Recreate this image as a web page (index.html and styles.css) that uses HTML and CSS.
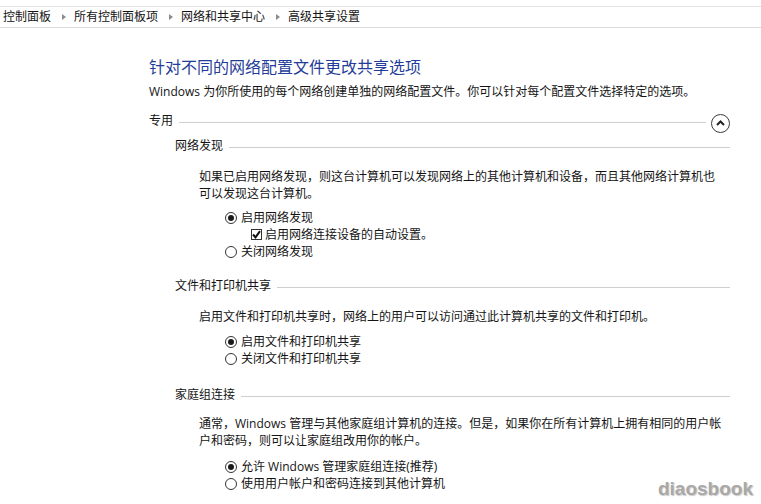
FILE: index.html
```html
<!DOCTYPE html>
<html lang="zh-CN">
<head>
<meta charset="utf-8">
<title>高级共享设置</title>
<link rel="stylesheet" href="styles.css">
</head>
<body>
<nav class="crumbs">
  <span class="crumb">控制面板</span><span class="sep"></span>
  <span class="crumb">所有控制面板项</span><span class="sep"></span>
  <span class="crumb">网络和共享中心</span><span class="sep"></span>
  <span class="crumb">高级共享设置</span>
</nav>
<main class="main">
  <h1 class="title">针对不同的网络配置文件更改共享选项</h1>
  <p class="intro">Windows 为你所使用的每个网络创建单独的网络配置文件。你可以针对每个配置文件选择特定的选项。</p>
  <div class="profile-head">
    <span class="label">专用</span><span class="rule"></span>
    <span class="collapse"><svg width="9" height="6" viewBox="0 0 9 6"><path d="M1 5 L4.5 1.5 L8 5" fill="none" stroke="#222" stroke-width="2"/></svg></span>
  </div>

  <section class="group discovery">
    <div class="group-head"><span class="label">网络发现</span><span class="rule"></span></div>
    <p class="desc">如果已启用网络发现，则这台计算机可以发现网络上的其他计算机和设备，而且其他网络计算机也<br>可以发现这台计算机。</p>
    <div class="options">
      <div class="opt"><span class="radio on"></span>启用网络发现</div>
      <div class="opt sub"><span class="check"><svg width="9" height="9" viewBox="0 0 9 9"><path d="M1 4.5 L3.5 7.3 L8 1.2" fill="none" stroke="#111" stroke-width="2"/></svg></span>启用网络连接设备的自动设置。</div>
      <div class="opt"><span class="radio"></span>关闭网络发现</div>
    </div>
  </section>

  <section class="group files">
    <div class="group-head"><span class="label">文件和打印机共享</span><span class="rule"></span></div>
    <p class="desc">启用文件和打印机共享时，网络上的用户可以访问通过此计算机共享的文件和打印机。</p>
    <div class="options">
      <div class="opt"><span class="radio on"></span>启用文件和打印机共享</div>
      <div class="opt"><span class="radio"></span>关闭文件和打印机共享</div>
    </div>
  </section>

  <section class="group home">
    <div class="group-head"><span class="label">家庭组连接</span><span class="rule"></span></div>
    <p class="desc">通常，Windows 管理与其他家庭组计算机的连接。但是，如果你在所有计算机上拥有相同的用户帐<br>户和密码，则可以让家庭组改用你的帐户。</p>
    <div class="options">
      <div class="opt"><span class="radio on"></span>允许 Windows 管理家庭组连接(推荐)</div>
      <div class="opt"><span class="radio"></span>使用用户帐户和密码连接到其他计算机</div>
    </div>
  </section>
</main>
<div class="watermark">diaosbook</div>
</body>
</html>
```

FILE: styles.css
```css
html, body {
  margin: 0;
  padding: 0;
  background: #ffffff;
}
body {
  font-family: "Open Sans", "Noto Sans CJK SC", sans-serif;
  font-size: 12px;
  line-height: 17px;
  color: #141414;
  overflow: hidden;
  height: 504px;
}
.crumbs {
  margin-top: 6px;
  height: 20px;
  border-top: 1px solid #e3e3e3;
  border-bottom: 1px solid #dcdcdc;
  display: flex;
  align-items: center;
  padding-left: 3px;
  line-height: 20px;
}
.sep {
  width: 0;
  height: 0;
  border-left: 4px solid #8c8c8c;
  border-top: 3.5px solid transparent;
  border-bottom: 3.5px solid transparent;
  margin: 0 8px 0 11px;
}
.main {
  padding: 28px 31px 0 149px;
}
.title {
  margin: 0;
  font-size: 16px;
  font-weight: normal;
  line-height: 22px;
  color: #1f3d99;
}
.intro {
  margin: 5px 0 0;
}
.profile-head {
  margin-top: 12px;
  height: 21px;
  display: flex;
  align-items: flex-start;
}
.label {
  white-space: nowrap;
}
.rule {
  flex: 1;
  height: 1px;
  background: #cfcfcf;
  margin: 10px 0 0 6px;
}
.profile-head .rule {
  margin-right: 5px;
}
.collapse {
  margin-top: 2px;
  width: 17px;
  height: 17px;
  border: 1px solid #3a3a3a;
  border-radius: 50%;
  display: flex;
  align-items: center;
  justify-content: center;
  box-sizing: content-box;
}
.collapse svg {
  margin-top: -1px;
}
.group {
  margin-left: 26px;
}
.group-head {
  margin-top: 4px;
  display: flex;
  align-items: flex-start;
  height: 17px;
}
.desc {
  margin: 14px 0 0 24px;
}
.options {
  margin: 7px 0 0 50px;
}
.files .group-head {
  margin-top: 17px;
}
.files .options {
  margin-top: 8px;
}
.home .group-head {
  margin-top: 19px;
}
.home .desc {
  margin-top: 12px;
}
.home .options {
  margin-top: 9px;
}
.opt {
  display: flex;
  align-items: center;
  height: 17px;
  white-space: nowrap;
}
.opt.sub {
  padding-left: 26px;
}
.radio {
  width: 10px;
  height: 10px;
  border: 1px solid #333;
  border-radius: 50%;
  margin-right: 4px;
  position: relative;
  background: #fff;
}
.radio.on::after {
  content: "";
  position: absolute;
  left: 2px;
  top: 2px;
  width: 6px;
  height: 6px;
  border-radius: 50%;
  background: #1a1a1a;
}
.check {
  width: 9px;
  height: 9px;
  border: 1px solid #333;
  margin-right: 3px;
  display: flex;
  align-items: center;
  justify-content: center;
  background: #fff;
}
.watermark {
  position: absolute;
  right: 8px;
  bottom: 5px;
  font-family: "Liberation Sans", Arial, sans-serif;
  font-weight: bold;
  font-size: 19px;
  line-height: 20px;
  color: #a9a9a9;
  text-shadow: 1px 1px 1px #c8c8c8;
}
```
